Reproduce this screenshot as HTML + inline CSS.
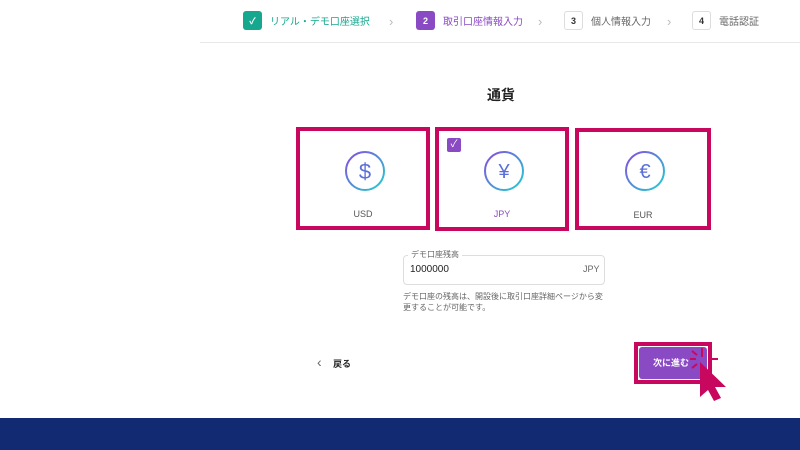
<!DOCTYPE html>
<html><head><meta charset="utf-8"><style>
*{margin:0;padding:0;box-sizing:border-box}
body{width:800px;height:450px;overflow:hidden;background:#fff;font-family:"Liberation Sans","Noto Sans CJK JP",sans-serif;position:relative}
.a{position:absolute}
.step{font-size:10px;display:flex;align-items:center}
.num{width:19px;height:19px;border-radius:3px;display:flex;align-items:center;justify-content:center;font-size:9px;font-weight:bold;margin-right:8px}
.box{position:absolute;border:4px solid #c8075e;background:#fff}
.lbl{position:absolute;width:100%;text-align:center;top:78px;font-size:9px;color:#555}
.chev{position:absolute;top:14px;color:#bbb;font-size:13px}
</style></head><body>
<div class="a" style="left:200px;top:42px;width:600px;height:1px;background:#e8e8e8"></div>
<div class="a step" style="left:243px;top:11px;color:#15a88f"><div class="num" style="background:#15a88f;color:#fff">✓</div>リアル・デモ口座選択</div>
<div class="chev" style="left:389px">›</div>
<div class="a step" style="left:416px;top:11px;color:#8a4ac4"><div class="num" style="background:#8a4ac4;color:#fff">2</div>取引口座情報入力</div>
<div class="chev" style="left:538px">›</div>
<div class="a step" style="left:564px;top:11px;color:#666"><div class="num" style="border:1px solid #ddd;color:#333">3</div>個人情報入力</div>
<div class="chev" style="left:667px">›</div>
<div class="a step" style="left:692px;top:11px;color:#666"><div class="num" style="border:1px solid #ddd;color:#333">4</div>電話認証</div>

<div class="a" style="left:487px;top:85px;font-size:14px;font-weight:bold;color:#222">通貨</div>

<svg width="0" height="0" style="position:absolute"><defs><linearGradient id="g" x1="0" y1="0" x2="1" y2="1"><stop offset="0" stop-color="#8a4ae0"/><stop offset="1" stop-color="#1fd0d0"/></linearGradient></defs></svg>

<div class="box" style="left:296px;top:127px;width:134px;height:103px">
<svg class="a" style="left:44px;top:19px" width="42" height="42"><circle cx="21" cy="21" r="19" fill="none" stroke="url(#g)" stroke-width="2"/><text x="21" y="29" text-anchor="middle" font-size="22" fill="#5a6fd8" font-family="Liberation Sans">$</text></svg>
<div class="lbl">USD</div></div>
<div class="box" style="left:435px;top:127px;width:134px;height:104px">
<div class="a" style="left:8px;top:7px;width:14px;height:14px;background:#8a4ac4;border-radius:2px;color:#fff;font-size:10px;text-align:center;line-height:14px">✓</div>
<svg class="a" style="left:44px;top:19px" width="42" height="42"><circle cx="21" cy="21" r="19" fill="none" stroke="url(#g)" stroke-width="2"/><text x="21" y="28" text-anchor="middle" font-size="20" fill="#5a6fd8" font-family="Liberation Sans">¥</text></svg>
<div class="lbl" style="color:#8a4ac4">JPY</div></div>
<div class="box" style="left:575px;top:128px;width:136px;height:102px">
<svg class="a" style="left:45px;top:18px" width="42" height="42"><circle cx="21" cy="21" r="19" fill="none" stroke="url(#g)" stroke-width="2"/><text x="21" y="28" text-anchor="middle" font-size="20" fill="#5a6fd8" font-family="Liberation Sans">€</text></svg>
<div class="lbl">EUR</div></div>

<div class="a" style="left:403px;top:255px;width:202px;height:30px;border:1px solid #ddd;border-radius:4px"></div>
<div class="a" style="left:408px;top:249px;background:#fff;padding:0 3px;font-size:8px;color:#666">デモ口座残高</div>
<div class="a" style="left:410px;top:264px;font-size:10px;color:#222">1000000</div>
<div class="a" style="left:583px;top:264px;font-size:9px;color:#666">JPY</div>
<div class="a" style="left:403px;top:291px;width:205px;font-size:8px;line-height:11px;color:#666">デモ口座の残高は、開設後に取引口座詳細ページから変更することが可能です。</div>

<div class="a" style="left:317px;top:354px;font-size:14px;color:#666">‹</div>
<div class="a" style="left:333px;top:357px;font-size:9px;font-weight:bold;color:#222">戻る</div>

<div class="a" style="left:634px;top:342px;width:78px;height:42px;border:4px solid #c8075e"></div>
<div class="a" style="left:639px;top:347px;width:68px;height:32px;background:#8a4ac4;border-radius:3px;color:#fff;font-size:9px;font-weight:bold;line-height:32px;padding-left:14px">次に進む</div>
<svg class="a" style="left:680px;top:345px" width="50" height="65"><g stroke="#c8075e" stroke-width="2"><line x1="22" y1="3" x2="22" y2="12"/><line x1="30" y1="14" x2="38" y2="14"/><line x1="10" y1="14" x2="16" y2="14"/><line x1="12" y1="23" x2="17" y2="19"/><line x1="12" y1="6" x2="17" y2="10"/></g><path d="M20 17 L46 42 L35 42 L41 53 L34 56 L28 45 L20 52 Z" fill="#c8075e"/></svg>

<div class="a" style="left:0;top:418px;width:800px;height:32px;background:#122a72"></div>
</body></html>
